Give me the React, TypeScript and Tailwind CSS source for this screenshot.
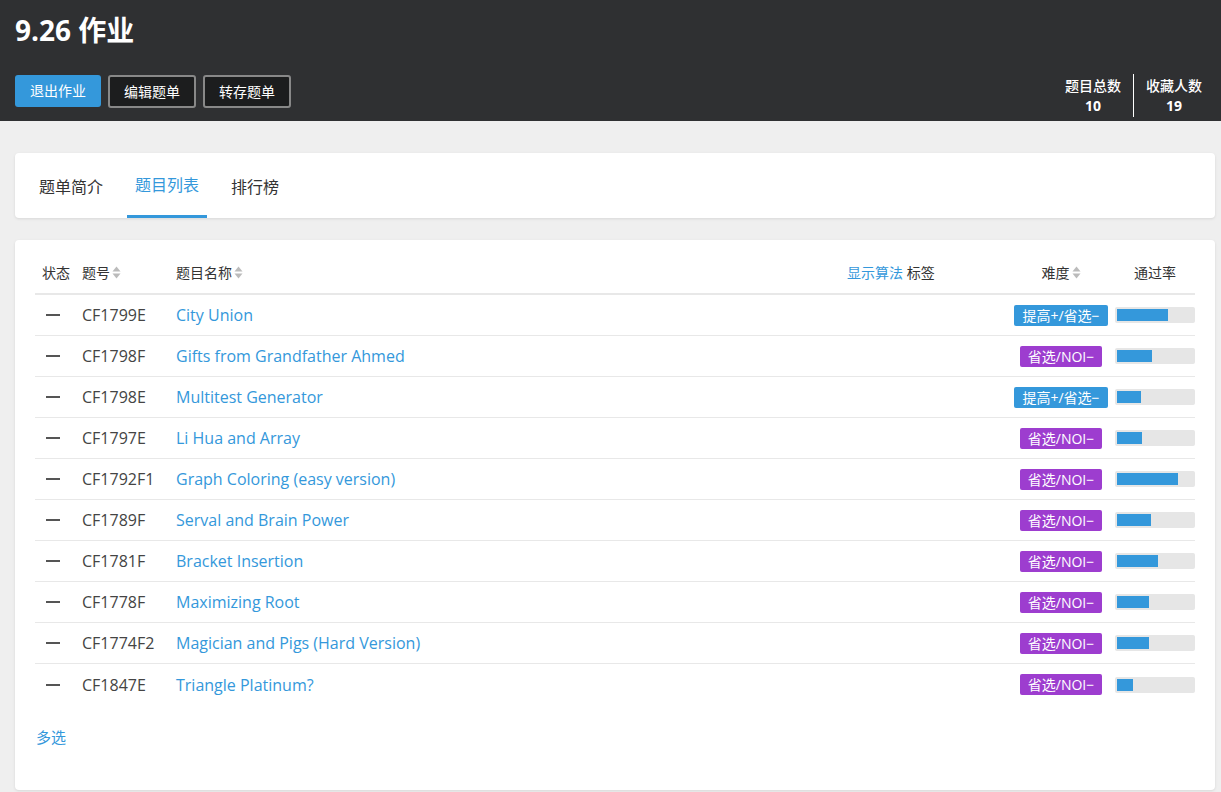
import React from "react";

const rows = [
  { id: "CF1799E", name: "City Union", diff: "提高+/省选−", color: "blue", pass: 51 },
  { id: "CF1798F", name: "Gifts from Grandfather Ahmed", diff: "省选/NOI−", color: "purple", pass: 35 },
  { id: "CF1798E", name: "Multitest Generator", diff: "提高+/省选−", color: "blue", pass: 24 },
  { id: "CF1797E", name: "Li Hua and Array", diff: "省选/NOI−", color: "purple", pass: 25 },
  { id: "CF1792F1", name: "Graph Coloring (easy version)", diff: "省选/NOI−", color: "purple", pass: 61 },
  { id: "CF1789F", name: "Serval and Brain Power", diff: "省选/NOI−", color: "purple", pass: 34 },
  { id: "CF1781F", name: "Bracket Insertion", diff: "省选/NOI−", color: "purple", pass: 41 },
  { id: "CF1778F", name: "Maximizing Root", diff: "省选/NOI−", color: "purple", pass: 32 },
  { id: "CF1774F2", name: "Magician and Pigs (Hard Version)", diff: "省选/NOI−", color: "purple", pass: 32 },
  { id: "CF1847E", name: "Triangle Platinum?", diff: "省选/NOI−", color: "purple", pass: 16 },
];

function SortIcon() {
  return (
    <svg width="9" height="13" viewBox="0 0 9 13" className="ml-[2px] inline-block">
      <path d="M4.5 0.5 L8.5 5.5 L0.5 5.5 Z" fill="#bbbbbb" />
      <path d="M4.5 12.5 L8.5 7.5 L0.5 7.5 Z" fill="#bbbbbb" />
    </svg>
  );
}

export default function App() {
  return (
    <div
      className="min-h-[792px] bg-[#efefef] text-[#333] text-[14px]"
      style={{ fontFamily: '"Open Sans", "Noto Sans CJK SC", sans-serif' }}
    >
      <div className="h-[121px] bg-[#2f3032] pl-[15px] flex justify-between">
        <div className="flex flex-col pt-[11px]">
          <h1 className="text-[28px] font-bold text-white leading-[38px]">9.26 作业</h1>
          <div className="flex mt-[26px]">
            <button className="h-[32px] w-[86px] rounded-[3px] bg-[#3498db] text-white text-[14px] leading-[32px]">
              退出作业
            </button>
            <button className="h-[33px] w-[88px] rounded-[3px] bg-[#1c1d1e] border-2 border-[#888] text-white text-[14px] ml-[7px]">
              编辑题单
            </button>
            <button className="h-[33px] w-[88px] rounded-[3px] bg-[#1c1d1e] border-2 border-[#888] text-white text-[14px] ml-[7px]">
              转存题单
            </button>
          </div>
        </div>
        <div className="flex items-end pb-[4px] pr-[19px]">
          <div className="flex items-center">
            <div className="flex flex-col items-center px-[12px] leading-[20px]">
              <span className="text-[14px] font-medium text-white">题目总数</span>
              <span className="text-[14px] font-bold text-white">10</span>
            </div>
            <div className="w-[1px] h-[43px] bg-white" />
            <div className="flex flex-col items-center pl-[12px] leading-[20px]">
              <span className="text-[14px] font-medium text-white">收藏人数</span>
              <span className="text-[14px] font-bold text-white">19</span>
            </div>
          </div>
        </div>
      </div>

      <div className="ml-[15px] mr-[6px] mt-[32px] h-[65px] bg-white rounded-[4px] shadow-[0_1px_3px_rgba(0,0,0,0.1)] flex items-stretch pl-[16px] gap-[16px]">
        <div className="px-[8px] flex items-center text-[16px] text-[#333] pt-[2px]">题单简介</div>
        <div className="px-[8px] flex items-center text-[16px] text-[#3498db] border-b-[3px] border-[#3498db] pt-[2px]">
          题目列表
        </div>
        <div className="px-[8px] flex items-center text-[16px] text-[#333] pt-[2px]">排行榜</div>
      </div>

      <div className="ml-[15px] mr-[6px] mt-[22px] h-[550px] bg-white rounded-[4px] shadow-[0_1px_3px_rgba(0,0,0,0.1)] px-[20px] pt-[20px]">
        <div className="flex items-center h-[35px] pb-[8px] border-b-2 border-[#e8e8e8] text-[14px] text-[#333]">
          <div className="w-[47px] pl-[7px]">状态</div>
          <div className="w-[94px] flex items-center">题号<SortIcon /></div>
          <div className="flex-1 flex items-center">题目名称<SortIcon /></div>
          <div className="w-[160px]">
            <span className="text-[#3498db]">显示算法</span> 标签
          </div>
          <div className="w-[108px] flex items-center justify-center">难度<SortIcon /></div>
          <div className="w-[80px] text-center">通过率</div>
        </div>
        {rows.map((r, i) => (
          <div
            key={r.id}
            className={`flex items-center h-[41px] text-[16px] ${
              i < rows.length - 1 ? "border-b border-[#e8e8e8]" : ""
            }`}
          >
            <div className="w-[47px] pl-[11px]">
              <div className="w-[14px] h-[2px] bg-[#555]" />
            </div>
            <div className="w-[94px] text-[#444]">{r.id}</div>
            <div className="flex-1 text-[#3498db]">{r.name}</div>
            <div className="w-[108px] flex justify-center">
              <span
                className={`h-[21px] leading-[21px] px-[8px] rounded-[2px] text-white text-[14px] ${
                  r.color === "blue" ? "bg-[#3498db]" : "bg-[#9d3dcf]"
                }`}
              >
                {r.diff}
              </span>
            </div>
            <div className="w-[80px] h-[16px] bg-[#e6e6e6] rounded-[2px] p-[2px]">
              <div className="h-full bg-[#3498db]" style={{ width: `${r.pass}px` }} />
            </div>
          </div>
        ))}
        <div className="mt-[21px] text-[15px] text-[#3498db] pl-[1px]">多选</div>
      </div>
    </div>
  );
}
